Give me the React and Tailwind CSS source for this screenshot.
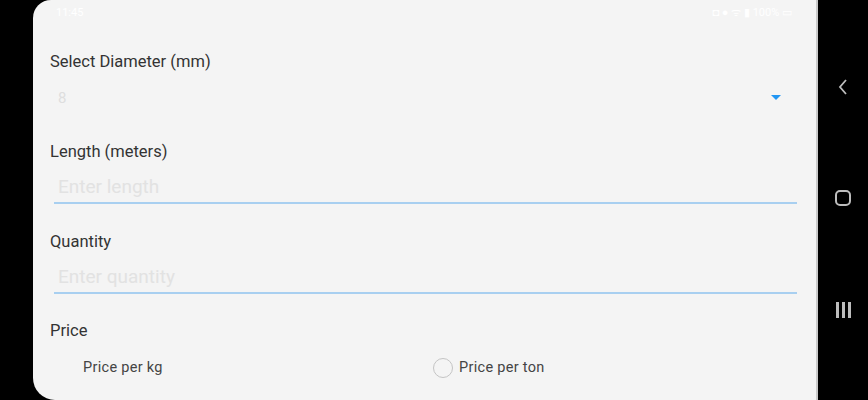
import React, { useState } from 'react';

function Field({ label, placeholder }) {
    return (
        <div className="flex flex-col">
            <div className="text-[16.5px] leading-[20px] text-[#333]">{label}</div>
            <div className="ml-[4px] mr-[15px] mt-[8px] h-[34px] flex items-center pt-[3px] border-b-2 border-b-[#a8cff0]">
                <span className="ml-[4px] text-[19px] text-[#e2e2e2]">{placeholder}</span>
            </div>
        </div>
    );
}

export default function App() {
    const [unit, setUnit] = useState('kg');

    return (
        <div className="w-[868px] h-[400px] bg-black flex overflow-hidden" style={{ fontFamily: 'Roboto, "Noto Sans", sans-serif' }}>
            {/* Left strip */}
            <div className="w-[33px] shrink-0" />

            {/* App panel */}
            <div className="w-[785px] shrink-0 h-[400px] bg-[#f4f4f4] rounded-tl-[18px] rounded-bl-[22px] border-r-2 border-[#c9c9c9] flex flex-col pl-[17px] pr-[4px]">
                {/* Status bar */}
                <div className="h-[26px] flex items-center justify-between text-white text-[11px] pl-[6px] pr-[20px]">
                    <span>11:45</span>
                    <span>◘ ● ᯤ ▮ 100% ▭</span>
                </div>

                <div className="mt-[26px] text-[16.5px] leading-[20px] text-[#333]">Select Diameter (mm)</div>
                <div className="mt-[16px] h-[20px] flex items-center justify-between pl-[8px] pr-[31px]">
                    <span className="text-[15px] text-[#dedede]">8</span>
                    <svg width="10" height="6" viewBox="0 0 10 6"><path d="M0 0h10L5 5z" fill="#2196f3" /></svg>
                </div>

                <div className="mt-[34px]">
                    <Field label="Length (meters)" placeholder="Enter length" />
                </div>
                <div className="mt-[28px]">
                    <Field label="Quantity" placeholder="Enter quantity" />
                </div>

                <div className="mt-[27px] text-[16.5px] leading-[20px] text-[#333]">Price</div>
                <div className="mt-[16px] flex items-center text-[14.5px] tracking-[0.3px] text-[#444]">
                    <button onClick={() => setUnit('kg')} className="w-[383px] flex items-center pl-[33px]">
                        Price per kg
                    </button>
                    <button onClick={() => setUnit('ton')} className="flex items-center gap-[6px]">
                        <span className={unit === 'ton' ? 'w-[20px] h-[20px] rounded-full border-2 border-[#2196f3]' : 'w-[20px] h-[20px] rounded-full border-[1.5px] border-[#c4c4c4]'} />
                        Price per ton
                    </button>
                </div>
            </div>

            {/* Nav bar */}
            <div className="flex-1 flex flex-col items-center pt-[78px] gap-[94px]">
                <svg width="12" height="18" viewBox="0 0 12 18"><path d="M9 2L3 9l6 7" fill="none" stroke="#bdbdbd" strokeWidth="1.8" /></svg>
                <div className="w-[16px] h-[16px] rounded-[5px] border-2 border-[#bdbdbd]" />
                <div className="flex gap-[3px] mt-[2px]">
                    <div className="w-[3px] h-[16px] bg-[#bdbdbd]" />
                    <div className="w-[3px] h-[16px] bg-[#bdbdbd]" />
                    <div className="w-[3px] h-[16px] bg-[#bdbdbd]" />
                </div>
            </div>
        </div>
    );
}
